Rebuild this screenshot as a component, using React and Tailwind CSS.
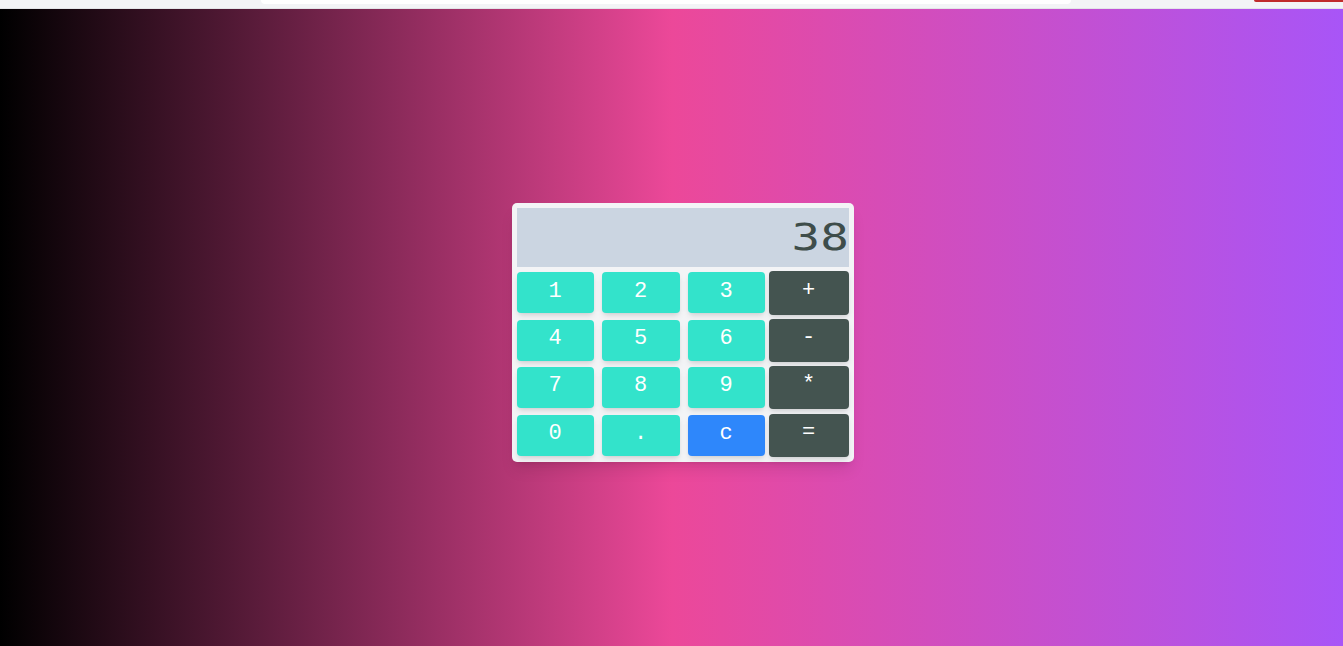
import { useState } from "react";

const rows = [
    ["1", "2", "3", "+"],
    ["4", "5", "6", "-"],
    ["7", "8", "9", "*"],
    ["0", ".", "c", "="],
];

// widths and left margins of the four columns
const cols = [
    "w-[77px]",
    "w-[78px] ml-[8px]",
    "w-[77px] ml-[8px]",
    "w-[80px] ml-[4px]",
];

// height and top margin of each row
const rowCls = ["h-[44px]", "h-[43px] mt-[4px]", "h-[43px] mt-[4px]", "h-[43px] mt-[5px]"];

function Key({ label, col, onPress }) {
    const isOp = ["+", "-", "*", "="].includes(label);
    if (isOp) {
        return (
            <button
                onClick={() => onPress(label)}
                className={`${cols[col]} shrink-0 h-full rounded-sm bg-[#445450] text-white text-[22px] leading-none pb-[4px] shadow-md`}
            >
                {label}
            </button>
        );
    }
    const bg = label === "c" ? "bg-[#2e87fb]" : "bg-[#33e3cb]";
    return (
        <button
            onClick={() => onPress(label)}
            className={`${cols[col]} shrink-0 h-[41px] rounded-sm ${bg} text-white text-[22px] leading-none pb-[2px] shadow-md`}
        >
            {label}
        </button>
    );
}

export default function App() {
    const [display, setDisplay] = useState("38");

    function press(k) {
        if (k === "c") return setDisplay("");
        if (k === "=") {
            try {
                // eslint-disable-next-line no-new-func
                setDisplay(String(Function(`return (${display})`)()));
            } catch {
                setDisplay("Error");
            }
            return;
        }
        setDisplay(display + k);
    }

    return (
        <div className="h-[646px] flex flex-col overflow-hidden" style={{ fontFamily: '"Liberation Mono", monospace' }}>
            <div className="h-[9px] bg-[#f3f4f6] border-b border-[#e3e5e8] flex items-start shrink-0">
                <div className="ml-[261px] w-[810px] h-[4px] bg-white rounded-b-md"></div>
                <div className="ml-[183px] flex-1 h-[2px] bg-[#c02c2c] rounded-bl-sm"></div>
            </div>
            <div className="flex-1 flex items-center justify-center pl-[22px] pt-[9px] bg-[linear-gradient(to_right,#000000,#ec4899,#a855f7)]">
                <div className="w-[342px] bg-[#f3f4f6] rounded-[5px] p-[5px] shadow-lg">
                    <div className="h-[59px] bg-[#cbd5e1] flex items-center justify-end pr-0 overflow-hidden">
                        <span
                            className="text-[38px] text-[#3e4d4a] leading-none scale-x-125 origin-right"
                            style={{ fontFamily: '"DejaVu Sans Mono", monospace' }}
                        >
                            {display}
                        </span>
                    </div>
                    <div className="mt-1 flex flex-col">
                        {rows.map((row, i) => (
                            <div key={i} className={`flex items-center ${rowCls[i]}`}>
                                {row.map((k, j) => (
                                    <Key key={k} label={k} col={j} onPress={press} />
                                ))}
                            </div>
                        ))}
                    </div>
                </div>
            </div>
        </div>
    );
}
